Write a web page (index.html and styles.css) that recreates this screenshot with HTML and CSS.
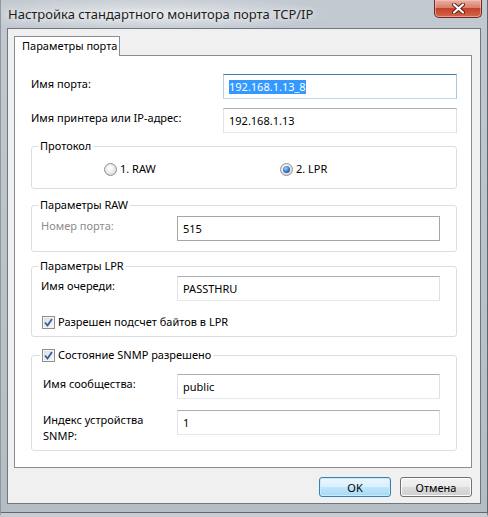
FILE: index.html
```html
<!DOCTYPE html>
<html lang="ru">
<head>
    <meta charset="UTF-8">
    <meta name="viewport" content="width=device-width, initial-scale=1.0">
    <title>Настройка стандартного монитора порта TCP/IP</title>
    <link rel="stylesheet" href="styles.css">
</head>
<body>
    <div class="window">
        <div class="titlebar">
            <span class="title">Настройка стандартного монитора порта TCP/IP</span>
            <button class="close" type="button">
                <svg width="13" height="11" viewBox="0 0 13 11">
                    <path d="M2 1.5 L11 9.5 M11 1.5 L2 9.5" stroke="#5a1d15" stroke-width="4" stroke-linecap="round"/>
                    <path d="M2 1.5 L11 9.5 M11 1.5 L2 9.5" stroke="#fff" stroke-width="2.2" stroke-linecap="round"/>
                </svg>
            </button>
        </div>

        <div class="client">
            <div class="tab">Параметры порта</div>

            <div class="page">
                <div class="row">
                    <label>Имя порта:</label>
                    <div class="field focused"><span class="sel">192.168.1.13_8</span></div>
                </div>
                <div class="row">
                    <label>Имя принтера или IP-адрес:</label>
                    <div class="field">192.168.1.13</div>
                </div>

                <fieldset class="group protocol">
                    <legend>Протокол</legend>
                    <div class="radios">
                        <div class="radio-item"><span class="radio"></span>1. RAW</div>
                        <div class="radio-item"><span class="radio on"></span>2. LPR</div>
                    </div>
                </fieldset>

                <fieldset class="group raw">
                    <legend>Параметры RAW</legend>
                    <div class="body">
                        <div class="grid-row">
                            <label class="muted">Номер порта:</label>
                            <div class="field disabled">515</div>
                        </div>
                    </div>
                </fieldset>

                <fieldset class="group lpr">
                    <legend>Параметры LPR</legend>
                    <div class="body">
                        <div class="grid-row">
                            <label>Имя очереди:</label>
                            <div class="field">PASSTHRU</div>
                        </div>
                        <div class="check-row">
                            <span class="check"><svg width="9" height="9" viewBox="0 0 9 9"><path d="M1 4.5 L3.5 7.5 L8 1" fill="none" stroke="#3c5a9e" stroke-width="1.8"/></svg></span>
                            Разрешен подсчет байтов в LPR
                        </div>
                    </div>
                </fieldset>

                <fieldset class="group snmp">
                    <legend>
                        <span class="check"><svg width="9" height="9" viewBox="0 0 9 9"><path d="M1 4.5 L3.5 7.5 L8 1" fill="none" stroke="#3c5a9e" stroke-width="1.8"/></svg></span>
                        Состояние SNMP разрешено
                    </legend>
                    <div class="body">
                        <div class="grid-row">
                            <label>Имя сообщества:</label>
                            <div class="field">public</div>
                        </div>
                        <div class="grid-row">
                            <label>Индекс устройства SNMP:</label>
                            <div class="field">1</div>
                        </div>
                    </div>
                </fieldset>
            </div>

            <div class="actions">
                <button class="btn default" type="button">OK</button>
                <button class="btn" type="button">Отмена</button>
            </div>
        </div>
    </div>
</body>
</html>
```

FILE: styles.css
```css
* {
    box-sizing: border-box;
}

body {
    margin: 0;
    font-family: "Noto Sans", sans-serif;
    font-size: 11px;
    color: #000;
    background-color: #a9b1b9;
}

/* window frame */
.window {
    width: 488px;
    height: 517px;
    display: flex;
    flex-direction: column;
    padding-bottom: 5px;
    background: linear-gradient(to bottom, #c2c9d0, #b4bcc4);
    border-left: 1px solid #8f979f;
    border-right: 1px solid #5f676f;
    border-bottom: 4px solid #c9cdd1;
    box-shadow: inset 0 -1px 0 #5f676f;
}

.titlebar {
    height: 28px;
    display: flex;
    justify-content: space-between;
    align-items: flex-start;
    padding-left: 7px;
    background: radial-gradient(ellipse 190px 18px at 145px 14px, rgba(255, 255, 255, 0.55), rgba(255, 255, 255, 0));
}

.title {
    margin-top: 5px;
    font-size: 13px;
    line-height: 18px;
    color: #1c1c1c;
    text-shadow: 0 0 6px #fff;
}

.close {
    width: 48px;
    height: 18px;
    margin-right: 5px;
    padding: 0;
    display: flex;
    align-items: center;
    justify-content: center;
    border: 1px solid #6d2a21;
    border-top: none;
    border-radius: 0 0 5px 5px;
    background: linear-gradient(to bottom, #eab0a2, #d9806c 45%, #c4412a 50%, #d6664c);
    box-shadow: inset 0 0 0 1px rgba(255, 210, 200, 0.5);
}

.client {
    flex: 1;
    margin: 0 6px 4px 6px;
    display: flex;
    flex-direction: column;
    padding: 7px 8px 0 6px;
    border: 1px solid #6e7780;
    background-color: #f0f0f0;
}

/* tab */
.tab {
    align-self: flex-start;
    width: 106px;
    height: 20px;
    padding-left: 7px;
    line-height: 17px;
    white-space: nowrap;
    background-color: #fff;
    border: 1px solid #898c95;
    border-bottom: none;
    margin-bottom: -1px;
    position: relative;
    z-index: 1;
}

.page {
    height: 413px;
    padding: 18px 14px 0 16px;
    background-color: #fff;
    border: 1px solid #898c95;
}

.row {
    display: grid;
    grid-template-columns: 192px 1fr;
}

.row + .row {
    margin-top: 9px;
}

label {
    padding-top: 2px;
    line-height: 16px;
}

.muted {
    color: #8d8d8d;
}

.field {
    height: 25px;
    padding: 0 5px;
    display: flex;
    align-items: center;
    line-height: 16px;
    background-color: #fff;
    border: 1px solid;
    border-color: #abadb3 #dbdfe6 #e3e9ef #e2e3ea;
}

.field.focused {
    border-color: #3d7bad #a4c9e3 #b7d9ed #b5cfe7;
}

.field.disabled {
    border-color: #a6a6a6;
}

.sel {
    background-color: #3399ff;
    color: #fff;
    line-height: 14px;
}

/* group boxes */
.group {
    margin: 0;
    padding: 0;
    min-width: 0;
    border: 1px solid #d5dfe5;
    border-radius: 3px;
}

.group legend {
    margin-left: 6px;
    padding: 0 2px;
    line-height: 16px;
}

.protocol {
    margin-top: 5px;
}

.radios {
    display: flex;
    padding: 7px 0 11px 72px;
}

.radio-item {
    width: 220px;
    display: flex;
    align-items: center;
    gap: 3px;
    line-height: 16px;
}

.radio {
    width: 13px;
    height: 13px;
    display: flex;
    align-items: center;
    justify-content: center;
    border: 1px solid #8e8f8f;
    border-radius: 50%;
    background: radial-gradient(circle at 45% 40%, #fafafa 20%, #dadada 75%);
}

.radio.on::after {
    content: "";
    width: 7px;
    height: 7px;
    border-radius: 50%;
    background: radial-gradient(circle at 40% 35%, #9bd6ff, #2a6cb8 60%, #17457f);
}

.grid-row {
    display: grid;
    grid-template-columns: 136px 263px;
}

.raw {
    margin-top: 8px;
}

.raw .body {
    padding: 3px 0 10px 9px;
}

.lpr {
    margin-top: 6px;
}

.lpr .body {
    padding: 2px 0 6px 9px;
}

.check-row {
    margin-top: 13px;
    padding-left: 1px;
    display: flex;
    align-items: center;
    gap: 3px;
    line-height: 16px;
}

.check {
    width: 13px;
    height: 13px;
    display: flex;
    align-items: center;
    justify-content: center;
    border: 1px solid #8f8f8f;
    background: linear-gradient(135deg, #d9dcdf, #f8f8f8);
    box-shadow: inset 0 0 0 1px #f4f4f4;
}

.snmp {
    margin-top: 10px;
}

.snmp legend {
    margin-left: 8px;
    display: flex;
    align-items: center;
    gap: 3px;
}

.snmp .body {
    padding: 11px 0 6px 11px;
}

.snmp .grid-row {
    grid-template-columns: 134px 263px;
}

.snmp .grid-row + .grid-row {
    margin-top: 11px;
}

/* dialog buttons */
.actions {
    display: flex;
    justify-content: flex-end;
    gap: 9px;
    margin-top: 9px;
}

.btn {
    width: 72px;
    height: 20px;
    padding: 0;
    font: inherit;
    color: #000;
    border: 1px solid #707070;
    border-radius: 3px;
    background: linear-gradient(to bottom, #f2f2f2, #ebebeb 50%, #dddddd 50%, #cfcfcf);
    box-shadow: inset 0 0 0 1px #fcfcfc;
}

.btn.default {
    border-color: #3c7fb1;
    background: linear-gradient(to bottom, #eaf6fd, #d9f0fc 50%, #bee6fd 50%, #a7d9f5);
    box-shadow: inset 0 0 0 1px #c8ebfb;
}
```
